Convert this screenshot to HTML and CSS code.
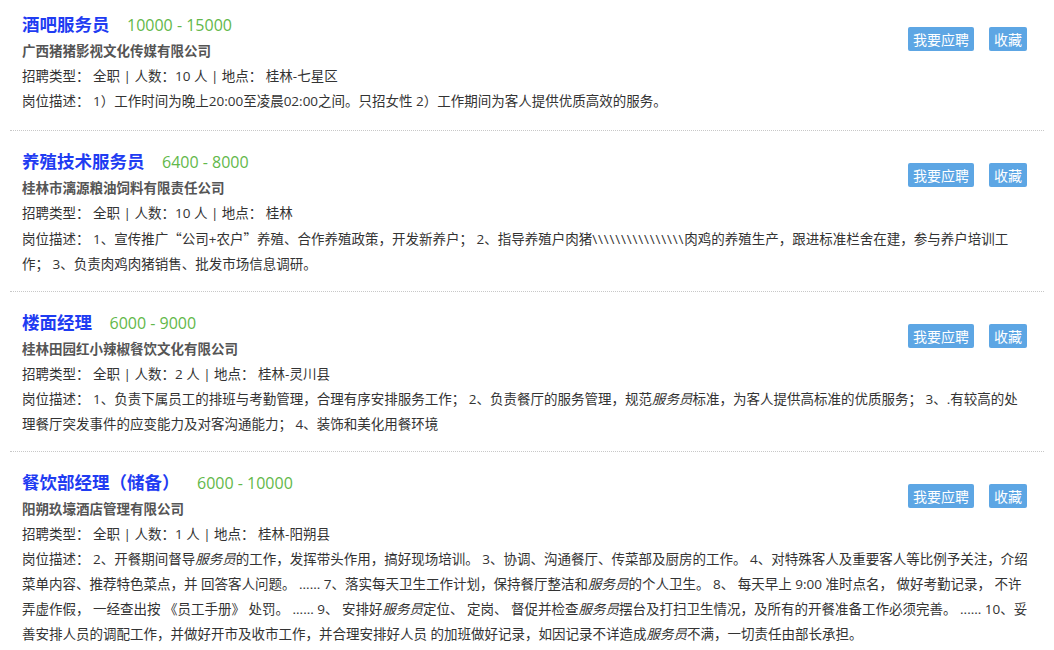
FILE: index.html
```html
<!DOCTYPE html>
<html>
<head>
  <meta charset="utf-8">
  <link rel="stylesheet" href="styles.css">
</head>
<body>
  <div class="job-list">
    <div class="job">
      <div class="job-actions">
        <button class="btn">我要应聘</button>
        <button class="btn">收藏</button>
      </div>
      <div class="job-title">
        <a class="job-name">酒吧服务员</a>
        <span class="job-salary">10000 - 15000</span>
      </div>
      <div class="job-company">广西猪猪影视文化传媒有限公司</div>
      <div class="job-info">招聘类型： 全职 | 人数：10 人 | 地点： 桂林-七星区</div>
      <div class="job-desc">岗位描述： 1）工作时间为晚上20:00至凌晨02:00之间。只招女性 2）工作期间为客人提供优质高效的服务。</div>
    </div>

    <div class="job">
      <div class="job-actions">
        <button class="btn">我要应聘</button>
        <button class="btn">收藏</button>
      </div>
      <div class="job-title">
        <a class="job-name">养殖技术服务员</a>
        <span class="job-salary">6400 - 8000</span>
      </div>
      <div class="job-company">桂林市漓源粮油饲料有限责任公司</div>
      <div class="job-info">招聘类型： 全职 | 人数：10 人 | 地点： 桂林</div>
      <div class="job-desc">岗位描述： 1、宣传推广<span class="cjk">“</span>公司+农户<span class="cjk">”</span>养殖、合作养殖政策，开发新养户； 2、指导养殖户肉猪<span class="slashes">\\\\\\\\\\\\\\\\</span>肉鸡的养殖生产，跟进标准栏舍在建，参与养户培训工作； 3、负责肉鸡肉猪销售、批发市场信息调研。</div>
    </div>

    <div class="job">
      <div class="job-actions">
        <button class="btn">我要应聘</button>
        <button class="btn">收藏</button>
      </div>
      <div class="job-title">
        <a class="job-name">楼面经理</a>
        <span class="job-salary">6000 - 9000</span>
      </div>
      <div class="job-company">桂林田园红小辣椒餐饮文化有限公司</div>
      <div class="job-info">招聘类型： 全职 | 人数：2 人 | 地点： 桂林-灵川县</div>
      <div class="job-desc">岗位描述： 1、负责下属员工的排班与考勤管理，合理有序安排服务工作； 2、负责餐厅的服务管理，规范<em>服务员</em>标准，为客人提供高标准的优质服务； 3、.有较高的处理餐厅突发事件的应变能力及对客沟通能力； 4、装饰和美化用餐环境</div>
    </div>

    <div class="job">
      <div class="job-actions">
        <button class="btn">我要应聘</button>
        <button class="btn">收藏</button>
      </div>
      <div class="job-title">
        <a class="job-name">餐饮部经理（储备）</a>
        <span class="job-salary">6000 - 10000</span>
      </div>
      <div class="job-company">阳朔玖壕酒店管理有限公司</div>
      <div class="job-info">招聘类型： 全职 | 人数：1 人 | 地点： 桂林-阳朔县</div>
      <div class="job-desc">岗位描述： 2、开餐期间督导<em>服务员</em>的工作，发挥带头作用，搞好现场培训。 3、协调、沟通餐厅、传菜部及厨房的工作。 4、对特殊客人及重要客人等比例予关注，介绍菜单内容、推荐特色菜点，并 回答客人问题。 ...... 7、落实每天卫生工作计划，保持餐厅整洁和<em>服务员</em>的个人卫生。 8、 每天早上 9:00 准时点名， 做好考勤记录， 不许弄虚作假， 一经查出按 《员工手册》 处罚。 ...... 9、 安排好<em>服务员</em>定位、 定岗、 督促并检查<em>服务员</em>摆台及打扫卫生情况，及所有的开餐准备工作必须完善。 ...... 10、妥善安排人员的调配工作，并做好开市及收市工作，并合理安排好人员 的加班做好记录，如因记录不详造成<em>服务员</em>不满，一切责任由部长承担。</div>
    </div>
  </div>
</body>
</html>
```

FILE: styles.css
```css
* {
  margin: 0;
  padding: 0;
  box-sizing: border-box;
}

body {
  background: #fff;
  color: #333;
  font-family: 'Open Sans', 'Noto Sans CJK SC', sans-serif;
  font-size: 13.5px;
}

.job-list {
  padding: 0 10px;
}

.job {
  padding: 17px 14px 14px 12px;
  border-bottom: 1px dotted #c8c8c8;
  line-height: 25px;
}

.job:first-child {
  padding-top: 11px;
  padding-bottom: 16px;
}

/* buttons on the right of the title row */
.job-actions {
  float: right;
  display: flex;
  gap: 15px;
  margin-top: 15px;
  margin-right: 3px;
}

.job:first-child .job-actions {
  margin-top: 16px;
}

.btn {
  background: #5da6e4;
  color: #fff;
  border: none;
  border-radius: 2px;
  height: 24px;
  padding: 0 5px;
  font-family: 'Noto Sans CJK SC', sans-serif;
  font-size: 14px;
  line-height: 24px;
  cursor: pointer;
}

.job-title {
  line-height: 26px;
}

.job-name {
  color: #1f3cf2;
  font-size: 17.5px;
  font-weight: bold;
  cursor: pointer;
}

.job-salary {
  color: #62b84a;
  font-size: 16px;
  margin-left: 14px;
}

.job-company {
  color: #555;
  font-weight: bold;
}

.job-desc em {
  font-style: italic;
}

/* full-width quotes like the original font */
.cjk {
  font-family: 'Noto Sans CJK SC', sans-serif;
}

.slashes {
  letter-spacing: 0.8px;
}
```
